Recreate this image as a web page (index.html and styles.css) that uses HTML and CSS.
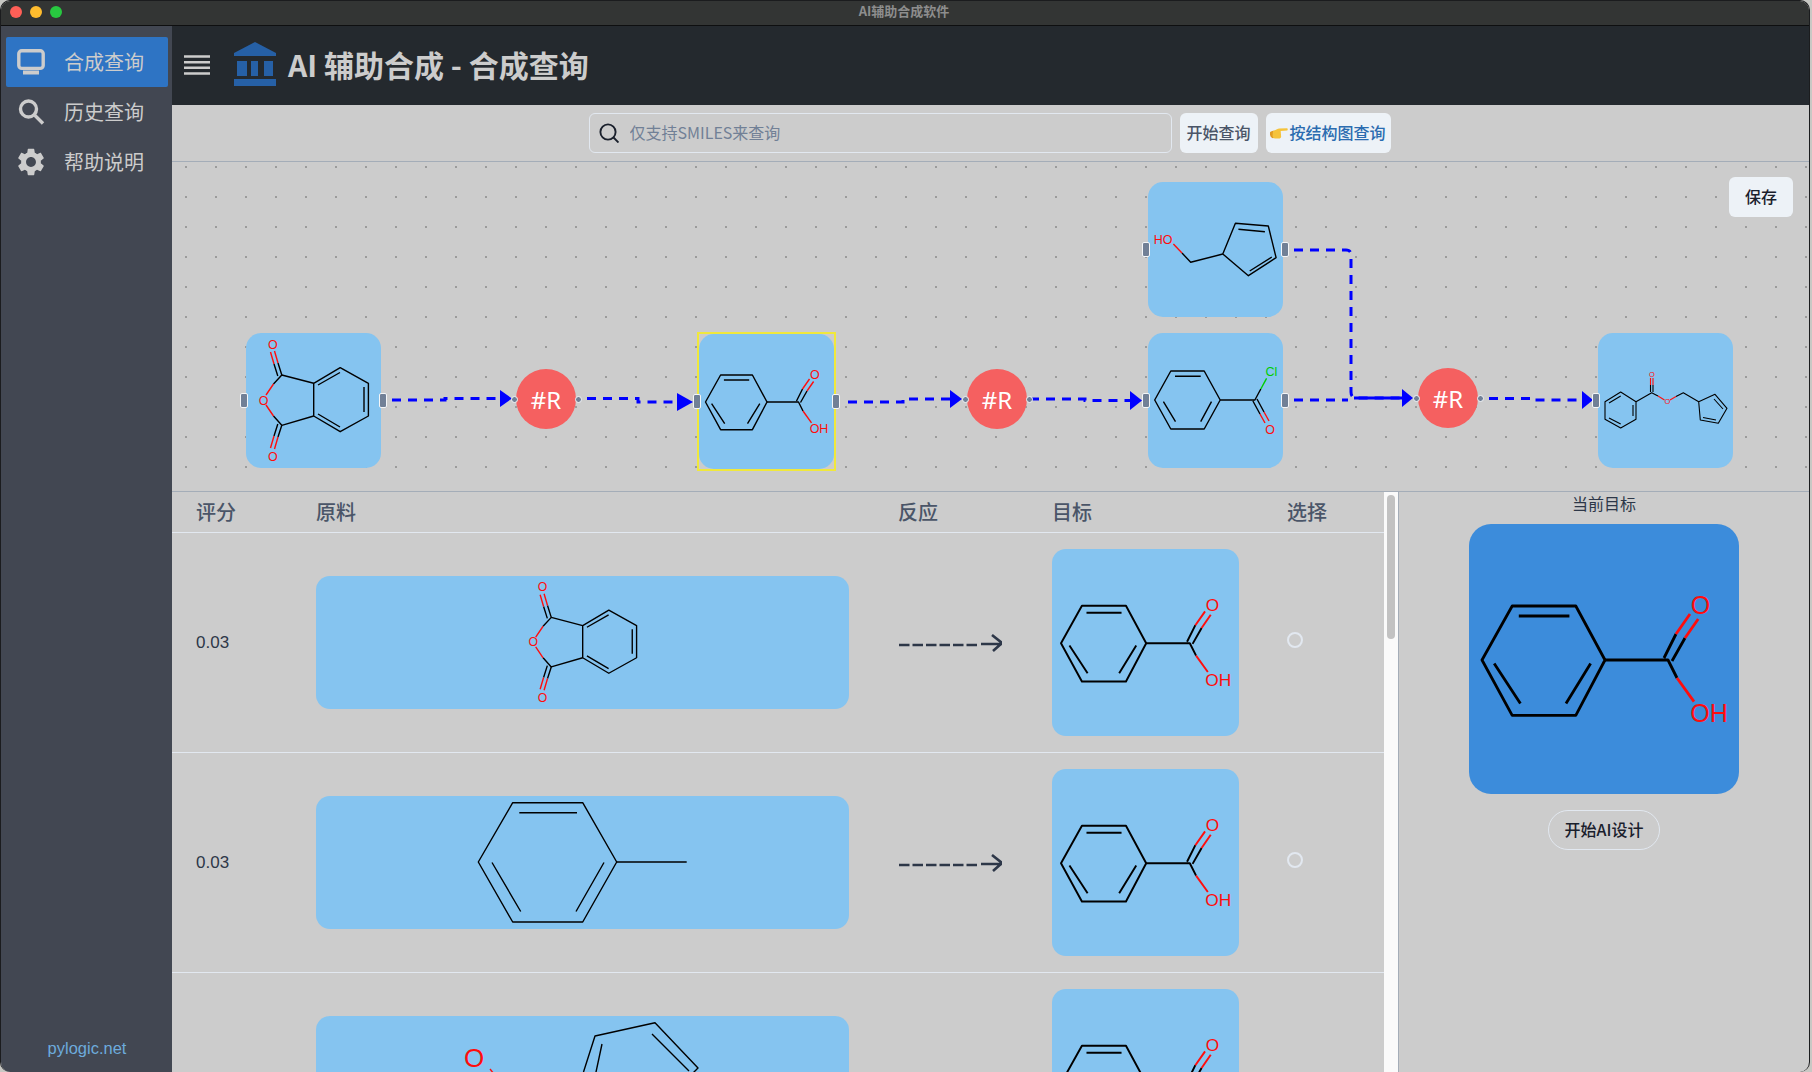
FILE: index.html
```html
<!DOCTYPE html>
<html lang="zh-CN">
<head>
<meta charset="utf-8">
<title>AI辅助合成软件</title>
<link rel="stylesheet" href="styles.css">
</head>
<body>
<svg class="defs" aria-hidden="true">
  <symbol id="benzoic" viewBox="0 0 135 135">
    <g class="bk">
      <path d="M6.5 68L21.6 41H53.4L68 68L53.4 95.7H21.6Z"/>
      <path d="M24.9 46H50.2M12.6 69.7L25.7 89.7M60.8 69.7L48.5 89.7"/>
      <path d="M68 68H99.5L104 77M97.5 67L103.5 55M101.5 68.5L108 57"/>
    </g>
    <path class="rd" d="M103.5 55L110.5 45M108 57L114.6 47.5M104 77L112.5 88.8"/>
  </symbol>
  <symbol id="phthalic" viewBox="0 0 135 135">
    <g class="bk">
      <path d="M94.2 34.7L122.4 50.3V83L94.2 98.7L67.7 83V50.3Z"/>
      <path d="M72 52L94 39.5M118 54V79M72 81L94 94"/>
      <path d="M67.7 50.3L35.8 42L27.5 51M67.7 83L35.8 92.3L27.5 83"/>
      <path d="M35.8 42L32 30M31.8 43L28 31M35.8 92.3L32 104M31.8 91L28 103"/>
    </g>
    <path class="rd" d="M32 30L28.5 18M28 31L24.5 19M32 104L28.5 116M28 103L24.5 115M27.5 51L20 62M27.5 83L20 72"/>
  </symbol>
  <symbol id="fulvenol" viewBox="0 0 135 135">
    <g class="bk">
      <path d="M87.4 41.3L120.3 44L128.1 75.7L100.4 93.7L74.8 72Z"/>
      <path d="M90.4 47.3L116.9 49.7M101.7 89L123.8 75"/>
      <path d="M74.8 72L42.7 80.3L34 71"/>
    </g>
    <path class="rd" d="M34 71L25.4 62"/>
  </symbol>
  <symbol id="acyl" viewBox="0 0 135 135">
    <g class="bk">
      <path d="M6.7 67L22.8 38H56.2L72.2 67L56.2 96H22.8Z"/>
      <path d="M27 43.3H52.7M15.4 68.7L27.5 88.7M63.5 68.7L52.7 88.7"/>
      <path d="M72.2 67H106.9L112.8 56M104.9 68L112 81M109 66L116 79"/>
    </g>
    <path class="gn" d="M112.8 56L118.6 45.3"/>
    <path class="rd" d="M112 81L117 90M116 79L121 88"/>
  </symbol>
  <symbol id="ester" viewBox="0 0 135 135">
    <g class="bk thin">
      <path d="M22.7 59L38 68.7V86.3L22.7 95L7 86.3V68.7Z"/>
      <path d="M11 70L22.7 63M35 72V83M11 85L22.7 91"/>
      <path d="M38 68.7L53.7 59.7L60 63M78 63.5L85.3 59.7L100.7 68.7L117 61.3L129 75.3L120.3 90.3L102.3 87L100.7 68.7"/>
      <path d="M116 66L125 76M118 87L105 84.5M52.5 59V52M55 59V52"/>
    </g>
    <path class="rd thin" d="M60 63L66.5 67M72 67L78 63.5M52.5 52V45M55 52V45"/>
  </symbol>
</svg>

<div class="window">
  <div class="titlebar">
    <span class="light light-red"></span>
    <span class="light light-amber"></span>
    <span class="light light-green"></span>
    <span class="window-title">AI辅助合成软件</span>
  </div>
  <div class="app">
    <nav class="sidebar">
      <a class="nav-item active">
        <svg class="nav-icon" viewBox="0 0 28 26"><rect x="1.8" y="1.8" width="24.4" height="17.6" rx="3"/><path class="solid" d="M6 21.5H22V25.5H6Z"/></svg>
        <span>合成查询</span>
      </a>
      <a class="nav-item">
        <svg class="nav-icon" viewBox="0 0 28 26"><circle cx="11.5" cy="10" r="8"/><path d="M17.5 16L26 24.5"/></svg>
        <span>历史查询</span>
      </a>
      <a class="nav-item">
        <svg class="nav-icon gear" viewBox="2.2 1.8 19.6 20.4"><path fill-rule="evenodd" d="M19.14 12.94c.04-.3.06-.61.06-.94 0-.32-.02-.64-.07-.94l2.03-1.58c.18-.14.23-.41.12-.61l-1.92-3.32c-.12-.22-.37-.29-.59-.22l-2.39.96c-.5-.38-1.03-.7-1.62-.94l-.36-2.54c-.04-.24-.24-.41-.48-.41h-3.84c-.24 0-.43.17-.47.41l-.36 2.54c-.59.24-1.13.57-1.62.94l-2.39-.96c-.22-.08-.47 0-.59.22L2.74 8.87c-.12.21-.08.47.12.61l2.03 1.58c-.05.3-.09.63-.09.94s.02.64.07.94l-2.03 1.58c-.18.14-.23.41-.12.61l1.92 3.32c.12.22.37.29.59.22l2.39-.96c.5.38 1.03.7 1.62.94l.36 2.54c.05.24.24.41.48.41h3.84c.24 0 .44-.17.47-.41l.36-2.54c.59-.24 1.13-.56 1.62-.94l2.39.96c.22.08.47 0 .59-.22l1.92-3.32c.12-.22.07-.47-.12-.61l-2.01-1.58zM12 15.6c-1.98 0-3.6-1.62-3.6-3.6s1.62-3.6 3.6-3.6 3.6 1.62 3.6 3.6-1.62 3.6-3.6 3.6z"/></svg>
        <span>帮助说明</span>
      </a>
      <div class="sidebar-foot">pylogic.net</div>
    </nav>

    <main class="main">
      <header class="topbar">
        <svg class="burger" viewBox="0 0 26 20"><path d="M0 1.5H26M0 7.2H26M0 12.8H26M0 18.5H26"/></svg>
        <svg class="bank" viewBox="0 0 42 44"><path d="M21 0L42 11V14H0V11Z"/><path d="M3 19H13V34H3ZM17 19H24V34H17ZM30 19H39V34H30ZM0 37H42V44H0Z"/></svg>
        <h1 class="app-title">AI 辅助合成 - 合成查询</h1>
      </header>

      <section class="searchbar">
        <label class="search-field">
          <svg class="search-icon" viewBox="0 0 20 20"><circle cx="9" cy="9" r="7.6"/><path d="M14.5 14.5L19.5 19.5"/></svg>
          <input class="search-input" type="text" placeholder="仅支持SMILES来查询">
        </label>
        <button class="btn btn-start">开始查询</button>
        <button class="btn btn-structure">
          <svg class="hand" viewBox="0 0 21 13"><path class="cuff" d="M0 5.5C2 4 5 3.5 6.5 4V11.5L3.5 12.5C1.5 12.5 0 10 0 8Z"/><path d="M3.5 4.2C6 3.5 8 1.5 10.5 1.2L20 1C21 1.2 21 3.4 20 3.6L12.5 4.2L13 11C13 12.5 11.5 13 10.5 13H6C4 13 3 11.5 3 9.5Z"/></svg><span>按结构图查询</span>
        </button>
      </section>

      <section class="flow">
        <svg class="edges" viewBox="172 162 1636 329">
          <g class="edge">
            <path d="M392 400H445V398.5H500"/>
            <path d="M587 398.5H638V402H680"/>
            <path d="M848 402H903V399H950"/>
            <path d="M1030 399H1085V400.5H1130"/>
            <path d="M1294 400H1348"/>
            <path d="M1294 250H1346Q1351 250 1351 255V392Q1351 398 1357 398H1402"/>
            <path class="edge-solid" d="M1354 398H1402"/>
            <path d="M1489 398.5H1537V400H1582"/>
          </g>
          <g class="arrow">
            <path d="M500 390L512 398.5L500 407Z"/>
            <path d="M677 393L693 402L677 411Z"/>
            <path d="M950 390L962 399L950 408Z"/>
            <path d="M1130 391L1142 400.5L1130 410Z"/>
            <path d="M1402 389L1413 398L1402 407Z"/>
            <path d="M1582 391L1593 400L1582 409Z"/>
          </g>
        </svg>

        <div class="node node-a">
          <svg class="mol" viewBox="0 0 135 135"><use href="#phthalic"/><text class="at red" x="26.9" y="15.5">O</text><text class="at red" x="17.5" y="71.5">O</text><text class="at red" x="26.9" y="127.5">O</text></svg>
          <i class="handle left"></i><i class="handle right"></i>
        </div>
        <div class="rxn rxn-a">#R<i class="port left"></i><i class="port right"></i></div>
        <div class="node node-b selected">
          <svg class="mol" viewBox="0 0 135 135"><use href="#benzoic"/><text class="at red" x="115.8" y="45">O</text><text class="at red" x="120" y="99">OH</text></svg>
          <i class="handle left"></i><i class="handle right"></i>
        </div>
        <div class="rxn rxn-b">#R<i class="port left"></i><i class="port right"></i></div>
        <div class="node node-c">
          <svg class="mol" viewBox="0 0 135 135"><use href="#fulvenol"/><text class="at red" x="15" y="61.5">HO</text></svg>
          <i class="handle left"></i><i class="handle right"></i>
        </div>
        <div class="node node-d">
          <svg class="mol" viewBox="0 0 135 135"><use href="#acyl"/><text class="at green" x="123.4" y="43">Cl</text><text class="at red" x="122" y="100.5">O</text></svg>
          <i class="handle left"></i><i class="handle right"></i>
        </div>
        <div class="rxn rxn-c">#R<i class="port left"></i><i class="port right"></i></div>
        <div class="node node-e">
          <svg class="mol" viewBox="0 0 135 135"><use href="#ester"/><text class="at tiny red" x="54" y="44">O</text><text class="at tiny red" x="69.3" y="71">O</text></svg>
          <i class="handle left"></i>
        </div>
        <button class="btn btn-save">保存</button>
      </section>

      <section class="lower">
        <div class="results">
          <div class="grid grid-head">
            <div>评分</div><div>原料</div><div>反应</div><div>目标</div><div>选择</div>
          </div>
          <div class="grid row">
            <div class="score">0.03</div>
            <div class="source">
              <svg class="src-mol" viewBox="0 0 135 135"><use href="#phthalic"/><text class="at red" x="26.9" y="15.5">O</text><text class="at red" x="17.5" y="71.5">O</text><text class="at red" x="26.9" y="127.5">O</text></svg>
            </div>
            <svg class="rx-arrow" viewBox="0 0 103 18"><path class="dash" d="M0 11H79"/><path d="M82 10H103M93 1L103 9L94 17"/></svg>
            <div class="target"><svg class="mol" viewBox="0 0 135 135"><use href="#benzoic"/><text class="at red" x="115.8" y="45">O</text><text class="at red" x="120" y="99">OH</text></svg></div>
            <span class="radio"></span>
          </div>
          <div class="grid row">
            <div class="score">0.03</div>
            <div class="source">
              <svg class="wide-mol" viewBox="0 0 533 133"><g class="bk"><path d="M162.3 66L196.7 6.7H266.7L300.7 66L266.7 126H196.7Z"/><path d="M203.3 16.7H261M176 66.5L204.7 115.5M288 66.5L260 115.5M300.7 66H370.7"/></g></svg>
            </div>
            <svg class="rx-arrow" viewBox="0 0 103 18"><path class="dash" d="M0 11H79"/><path d="M82 10H103M93 1L103 9L94 17"/></svg>
            <div class="target"><svg class="mol" viewBox="0 0 135 135"><use href="#benzoic"/><text class="at red" x="115.8" y="45">O</text><text class="at red" x="120" y="99">OH</text></svg></div>
            <span class="radio"></span>
          </div>
          <div class="grid row">
            <div class="score"></div>
            <div class="source">
              <svg class="wide-mol" viewBox="0 0 533 133"><g class="bk"><path d="M267.5 56L279 20L339 6.7L382 52L374 60M286 28L277 70M336 18L373 55"/></g><path class="rd" d="M174 53L178 58"/><text class="at big red" x="158" y="51">O</text></svg>
            </div>
            <div></div>
            <div class="target"><svg class="mol" viewBox="0 0 135 135"><use href="#benzoic"/><text class="at red" x="115.8" y="45">O</text></svg></div>
          </div>
        </div>
        <div class="scrollbar"><div class="thumb"></div></div>
        <aside class="panel">
          <div class="panel-title">当前目标</div>
          <div class="current"><svg class="mol" viewBox="0 0 135 135"><use href="#benzoic"/><text class="at red" x="115.8" y="45">O</text><text class="at red" x="120" y="99">OH</text></svg></div>
          <button class="btn-design">开始AI设计</button>
        </aside>
      </section>
    </main>
  </div>
</div>
</body>
</html>
```

FILE: styles.css
```css
* { box-sizing: border-box; }
html, body { margin: 0; height: 100%; background: #c8c8c4; overflow: hidden; }
body { font-family: "Noto Sans CJK SC", "Liberation Sans", sans-serif; }
.defs { position: absolute; width: 0; height: 0; }

.window {
  width: 1810px;
  height: 1072px;
  display: flex;
  flex-direction: column;
  border: 1px solid #1b1c1e;
  border-bottom: 0;
  border-radius: 10px;
  overflow: hidden;
  background: #cccccc;
}

.titlebar {
  height: 25px;
  flex: none;
  display: flex;
  align-items: center;
  gap: 8px;
  padding: 0 0 3px 9px;
  background: #333534;
  border-bottom: 1px solid #0e0f10;
  position: relative;
}
.light { width: 12px; height: 12px; border-radius: 50%; }
.light-red { background: #ff5f57; }
.light-amber { background: #febc2e; }
.light-green { background: #28c840; }
.window-title {
  position: absolute;
  left: 0;
  right: 0;
  top: 0;
  text-align: center;
  font-size: 13px;
  line-height: 19px;
  font-weight: 700;
  color: #8d8d8d;
  padding-right: 2px;
}

.app { flex: 1; display: flex; min-height: 0; }

.sidebar {
  width: 171px;
  flex: none;
  display: flex;
  flex-direction: column;
  padding: 11px 4px 12px 5px;
  background: #424752;
  color: #cccccc;
}
.nav-item {
  height: 50px;
  display: flex;
  align-items: center;
  gap: 19px;
  padding-left: 11px;
  font-size: 20px;
  border-radius: 2px;
}
.nav-item span { padding-bottom: 2px; }
.nav-item.active { background: #2e74c4; }
.nav-icon {
  width: 28px;
  height: 26px;
  flex: none;
  fill: none;
  stroke: #cccccc;
  stroke-width: 3.4;
}
.nav-icon .solid { fill: #cccccc; stroke: none; }
.nav-icon.gear { fill: #cccccc; stroke: none; height: 28px; }
.sidebar-foot {
  margin-top: auto;
  text-align: center;
  font-family: "Liberation Sans", sans-serif;
  font-size: 16.5px;
  line-height: 24px;
  color: #6dabdc;
}

.main { flex: 1; min-width: 0; display: flex; flex-direction: column; }

.topbar {
  height: 79px;
  flex: none;
  display: flex;
  align-items: center;
  padding: 0 0 3px 12px;
  background: #24292e;
}
.burger { width: 26px; height: 20px; margin: 2px 24px 0 0; fill: none; stroke: #cccccc; stroke-width: 2.6; }
.bank { width: 42px; height: 44px; margin-right: 12px; fill: #2660a6; }
.app-title { margin: 0; font-size: 30px; font-weight: 700; line-height: 40px; color: #cccccc; }

.searchbar {
  height: 57px;
  flex: none;
  display: flex;
  align-items: flex-start;
  justify-content: center;
  gap: 8px;
  padding: 8px 2px 0 0;
  border-bottom: 1px solid #a4adb8;
}
.search-field {
  width: 583px;
  height: 40px;
  display: flex;
  align-items: center;
  gap: 11px;
  padding-left: 9px;
  border: 1px solid #e2e8f0;
  border-radius: 6px;
}
.search-icon { width: 20px; height: 20px; flex: none; fill: none; stroke: #1a202c; stroke-width: 1.9; }
.search-input {
  flex: 1;
  border: 0;
  outline: 0;
  padding: 0 0 2px;
  background: transparent;
  font: 16px "Noto Sans CJK SC", sans-serif;
}
.search-input::placeholder { color: #718096; opacity: 1; }
.btn {
  height: 40px;
  border: 0;
  border-radius: 6px;
  background: #edf2f7;
  font-family: inherit;
  font-size: 16px;
  font-weight: 500;
  padding: 0 0 2px;
}
.btn-start { width: 78px; color: #4a5568; }
.btn-structure { width: 125px; display: flex; align-items: center; justify-content: center; color: #2b6cb0; }
.hand { width: 18px; height: 12px; margin: 2px 1px 0 0; fill: #f5c33b; }
.hand .cuff { fill: #df9a24; }

.flow {
  height: 330px;
  flex: none;
  position: relative;
  border-bottom: 1px solid #a4adb8;
  background-image: radial-gradient(circle at center, #9a9a9a 0, #9a9a9a 0.7px, transparent 1px);
  background-size: 30px 30px;
  background-position: -1px -10px;
}
.edges { position: absolute; left: 0; top: 0; width: 1636px; height: 329px; }
.edge { fill: none; stroke: #0000ff; stroke-width: 3; stroke-dasharray: 9 7; }
.edge .edge-solid { stroke-dasharray: none; }
.arrow { fill: #0000ff; }

.node {
  position: absolute;
  width: 135px;
  height: 135px;
  border-radius: 15px;
  background: #85c4f0;
}
.node-a { left: 74px; top: 171px; }
.node-b { left: 527px; top: 172px; }
.node-c { left: 976px; top: 20px; }
.node-d { left: 976px; top: 171px; }
.node-e { left: 1426px; top: 171px; }
.node.selected::before {
  content: "";
  position: absolute;
  inset: -2px;
  border: 2px solid #f0e83c;
  pointer-events: none;
}

.mol { display: block; width: 100%; height: 100%; }
.handle {
  position: absolute;
  top: 60px;
  width: 8px;
  height: 15px;
  background: #718096;
  border: 1.5px solid #f4f6f8;
  border-radius: 2px;
}
.handle.left { left: -6px; }
.handle.right { right: -6px; }

.rxn {
  position: absolute;
  width: 60px;
  height: 60px;
  display: flex;
  align-items: center;
  justify-content: center;
  border-radius: 50%;
  background: #f56060;
  color: #fff;
  font-family: "Noto Sans", sans-serif;
  font-size: 24px;
}
.rxn-a { left: 344px; top: 207px; }
.rxn-b { left: 795px; top: 207px; }
.rxn-c { left: 1246px; top: 206px; }
.port {
  position: absolute;
  top: 27px;
  width: 7px;
  height: 7px;
  border-radius: 50%;
  background: #718096;
  border: 1.5px solid #f4f6f8;
}
.port.left { left: -5px; }
.port.right { right: -6px; }

.btn-save {
  position: absolute;
  left: 1557px;
  top: 15px;
  width: 64px;
  color: #1a202c;
}

.bk, .rd, .gn { fill: none; stroke-width: 1.4; stroke-linejoin: round; }
.bk { stroke: #000; }
.rd { stroke: #ff0d0d; }
.gn { stroke: #00cc00; }
.thin { stroke-width: 1.1; }
.at { font-family: "Liberation Sans", sans-serif; font-size: 12.5px; text-anchor: middle; }
.at.tiny { font-size: 7.5px; }
.at.big { font-size: 26px; }
.red { fill: #ff0d0d; }
.green { fill: #00cc00; }

.lower { flex: 1; min-height: 0; display: flex; }
.results { width: 1212px; flex: none; overflow: hidden; }
.grid {
  display: grid;
  grid-template-columns: 120px 582px 154px 235px 1fr;
  padding-left: 24px;
  align-items: center;
  border-bottom: 1px solid #e2e8f0;
}
.grid-head {
  height: 41px;
  padding-bottom: 2px;
  font-size: 20px;
  font-weight: 500;
  color: #4a5568;
}
.row { height: 220px; }
.score { font-family: "Liberation Sans", sans-serif; font-size: 17px; color: #2d3748; }
.source {
  width: 533px;
  height: 133px;
  display: flex;
  justify-content: center;
  border-radius: 14px;
  background: #85c4f0;
}
.src-mol { width: 133px; height: 133px; }
.wide-mol { width: 533px; height: 133px; }
.rx-arrow { width: 103px; height: 18px; margin-left: 1px; fill: none; stroke: #2d3748; stroke-width: 2.6; }
.rx-arrow .dash { stroke-dasharray: 10.5 3; }
.target { width: 187px; height: 187px; border-radius: 14px; background: #85c4f0; }
.radio {
  width: 16px;
  height: 16px;
  margin-bottom: 6px;
  border: 2px solid #e2e8f0;
  border-radius: 50%;
}

.scrollbar { width: 14px; flex: none; background: #fafafa; padding: 3px 3px 0; }
.thumb { width: 8px; height: 144px; border-radius: 4px; background: #c2c2c2; }

.panel {
  flex: 1;
  display: flex;
  flex-direction: column;
  align-items: center;
  border-left: 1px solid #a4adb8;
}
.panel-title { font-size: 16px; line-height: 22px; color: #2d3748; margin-bottom: 10px; }
.current { width: 270px; height: 270px; border-radius: 22px; background: #3c8cdb; }
.btn-design {
  margin-top: 16px;
  width: 112px;
  height: 40px;
  padding: 0 0 2px;
  border: 1px solid #e2e8f0;
  border-radius: 20px;
  background: transparent;
  font-family: inherit;
  font-size: 16px;
  font-weight: 500;
  color: #1a202c;
}
```
